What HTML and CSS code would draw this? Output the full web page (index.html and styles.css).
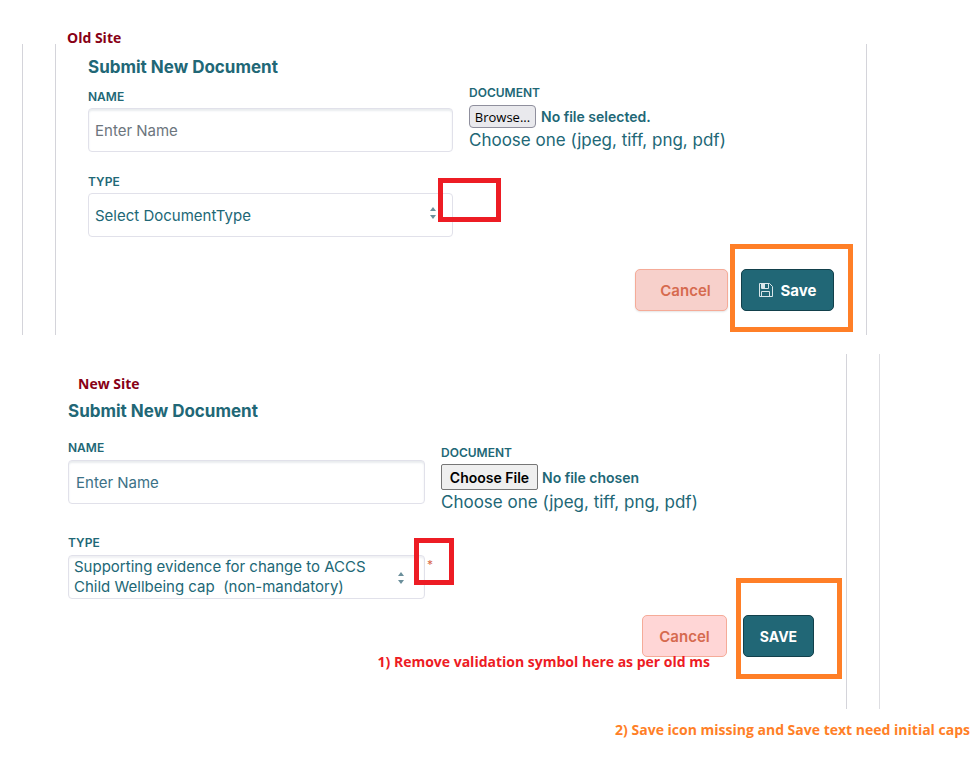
FILE: index.html
```html
<!DOCTYPE html>
<html lang="en">
<head>
    <meta charset="utf-8">
    <title>Submit New Document</title>
    <link rel="stylesheet" href="styles.css">
</head>

<body>
    <h2 class="site-title old-title">Old Site</h2>
    <section class="frame frame-old">
        <form class="panel">
            <h3>Submit New Document</h3>
            <div class="columns">
                <div class="col-left">
                    <label for="old-name">Name</label>
                    <div class="field"><input type="text" id="old-name" placeholder="Enter Name"></div>
                    <label for="old-type">Type</label>
                    <div class="field">
                        <select id="old-type">
                            <option>Select DocumentType</option>
                        </select>
                        <svg class="arrows" viewBox="0 0 6 12"><path d="M3 0l3 4H0zM3 12L0 8h6z"/></svg>
                        <span class="mark mark-red"></span>
                    </div>
                </div>
                <div class="col-right">
                    <label for="old-file">Document</label>
                    <div class="file-row">
                        <button type="button" id="old-file" class="browse">Browse...</button>
                        <span>No file selected.</span>
                    </div>
                    <p class="hint">Choose one (jpeg, tiff, png, pdf)</p>
                </div>
            </div>
            <div class="actions">
                <button type="button" class="btn cancel">Cancel</button>
                <div class="save-wrap">
                    <button type="button" class="btn save">
                        <svg class="disk" viewBox="0 0 14 14">
                            <path d="M.5.5h10l3 3v10H.5zM2.500.5v5h7v-5M2.500 13.500v-5h8v5"/>
                            <path class="solid" d="M3 1h3v4H3z"/>
                        </svg>
                        Save
                    </button>
                    <span class="mark mark-orange"></span>
                </div>
            </div>
        </form>
    </section>

    <section class="frame frame-new">
        <form class="panel">
            <h2 class="site-title new-title">New Site</h2>
            <h3>Submit New Document</h3>
            <div class="columns">
                <div class="col-left">
                    <label for="new-name">Name</label>
                    <div class="field"><input type="text" id="new-name" placeholder="Enter Name"></div>
                    <label for="new-type">Type</label>
                    <div class="field">
                        <select id="new-type">
                            <option>Supporting evidence for change to ACCS Child Wellbeing cap&nbsp; (non-mandatory)</option>
                        </select>
                        <svg class="arrows" viewBox="0 0 6 12"><path d="M3 0l3 4H0zM3 12L0 8h6z"/></svg>
                        <span class="required">*</span>
                        <span class="mark mark-red"></span>
                    </div>
                </div>
                <div class="col-right">
                    <label for="new-file">Document</label>
                    <input type="file" id="new-file">
                    <p class="hint">Choose one (jpeg, tiff, png, pdf)</p>
                </div>
            </div>
            <div class="actions">
                <button type="button" class="btn cancel">Cancel</button>
                <div class="save-wrap">
                    <button type="button" class="btn save">SAVE</button>
                    <span class="mark mark-orange"></span>
                </div>
                <p class="note note-red">1) Remove validation symbol here as per old ms</p>
            </div>
        </form>
    </section>
    <p class="note note-orange">2) Save icon missing and Save text need initial caps</p>
</body>
</html>
```
FILE: styles.css
```css
* {
    box-sizing: border-box;
}

body {
    margin: 0;
    background-color: #fff;
    color: #216776;
    font-family: Inter, sans-serif;
    font-size: 15px;
}

h2, h3, p {
    margin: 0;
}

.site-title, .note {
    font-family: "Open Sans", sans-serif;
    font-size: 14px;
    font-weight: 700;
    line-height: 20px;
}

.site-title {
    color: #880015;
}

.old-title {
    padding: 28px 0 0 67px;
    margin-bottom: -4px;
}

.new-title {
    padding-left: 10px;
    margin-bottom: 5px;
}

.frame-old {
    margin: 0 105px 19px 22px;
    padding-left: 32px;
    border-left: 1px solid #d4d4da;
}

.frame-new {
    margin-right: 92px;
    padding-right: 32px;
    border-right: 1px solid #dedee2;
}

.frame-old .panel {
    padding: 11px 32px 24px;
    border-left: 1px solid #d4d4da;
    border-right: 1px solid #d4d4da;
}

.frame-new .panel {
    padding: 20px 32px 52px 68px;
    border-right: 1px solid #d4d4da;
}

h3 {
    font-size: 17px;
    font-weight: 700;
    line-height: 24px;
}

.columns {
    display: grid;
    grid-template-columns: 1fr 1fr;
}

.frame-old .columns {
    column-gap: 16px;
    margin-top: 6px;
}

.frame-new .columns {
    margin-top: 17px;
}

.frame-old .col-left {
    padding-top: 4px;
}

.frame-new .col-left {
    padding-right: 16px;
}

.frame-new .col-right {
    padding-top: 5px;
}

label {
    display: block;
    margin-bottom: 3px;
    font-size: 12px;
    font-weight: 600;
    line-height: 16px;
    text-transform: uppercase;
}

.frame-new .col-left label {
    margin-bottom: 4px;
}

.field {
    position: relative;
}

.frame-old .field + label {
    margin-top: 22px;
}

.frame-new .field + label {
    margin-top: 31px;
}

.field input, .field select {
    display: block;
    width: 100%;
    height: 44px;
    padding: 0 6px;
    background-color: #fff;
    color: #216776;
    font: inherit;
    border: 1px solid #e1e1ea;
    border-radius: 4px;
}

.field input {
    box-shadow: inset 0 2px 2px #e9ecef;
}

.frame-new .field input {
    padding-left: 7px;
}

.field input::placeholder {
    color: #6c757d;
}

.frame-new .field input::placeholder {
    color: #3c7186;
}

.field select {
    appearance: none;
}

.frame-new .field select {
    padding: 1px 50px 1px 5px;
    line-height: 20px;
    white-space: normal;
    box-shadow: inset 0 2px 2px #f0f1f4;
}

.arrows {
    position: absolute;
    top: 14px;
    right: 17px;
    width: 6px;
    height: 12px;
    fill: #6b8f9b;
}

.frame-new .arrows {
    top: 17px;
    right: 21px;
}

.required {
    position: absolute;
    top: 0;
    left: 100%;
    padding-left: 2px;
    color: #d9694b;
    font-size: 12px;
    line-height: 20px;
}

.file-row {
    display: flex;
    align-items: center;
    gap: 5px;
    height: 23px;
    margin-top: 4px;
    font-size: 14px;
    font-weight: 600;
}

.browse {
    width: 67px;
    height: 23px;
    padding: 0;
    background-color: #e9e9ed;
    color: #000;
    font: 13px "Open Sans", sans-serif;
    border: 1px solid #8f8f9d;
    border-radius: 4px;
}

input[type="file"] {
    display: block;
    width: 100%;
    height: 26px;
    color: #216776;
    font: inherit;
    font-size: 14px;
    font-weight: 600;
}

input[type="file"]::file-selector-button {
    width: 97px;
    height: 26px;
    padding: 0;
    margin-right: 4px;
    background-color: #efefef;
    color: #000;
    font: inherit;
    border: 1px solid #767676;
    border-radius: 2px;
}

.hint {
    font-size: 17px;
    line-height: 24px;
}

.actions {
    position: relative;
    display: flex;
    justify-content: flex-end;
    gap: 16px;
    margin-top: 16px;
}

.frame-old .actions {
    gap: 13px;
    margin-top: 32px;
}

.btn {
    height: 42px;
    padding: 0 15px;
    font: inherit;
    font-size: 14px;
    font-weight: 600;
    border: 1px solid;
    border-radius: 5px;
}

.cancel {
    width: 85px;
    background-color: #ffd6d6;
    color: #d66a4f;
    font-size: 15px;
    border-color: #f5ab98;
}

.frame-old .cancel {
    width: 93px;
    padding: 0 16px 0 24px;
    background-color: #f7d0cb;
    box-shadow: 0 1px 2px #e4e4e4;
}

.save-wrap {
    position: relative;
}

.save {
    display: flex;
    align-items: center;
    justify-content: center;
    gap: 8px;
    width: 71px;
    background-color: #216776;
    color: #fff;
    font-weight: 700;
    border-color: #12404b;
}

.frame-old .save {
    width: 93px;
    font-size: 15px;
}

.disk {
    flex: none;
    width: 14px;
    height: 14px;
    fill: none;
    stroke: #d9e6e9;
}

.disk .solid {
    fill: #d9e6e9;
    stroke: none;
}

/* review marks drawn over the forms */
.mark {
    position: absolute;
    pointer-events: none;
}

.mark-red {
    top: -15px;
    left: calc(100% - 15px);
    width: 63px;
    height: 44px;
    border: 5px solid #ed1c24;
}

.frame-new .mark-red {
    top: -17px;
    left: calc(100% - 11px);
    width: 40px;
    height: 47px;
}

.mark-orange {
    top: -25px;
    left: -11px;
    width: 123px;
    height: 88px;
    border: 5px solid #ff7f27;
}

.frame-new .mark-orange {
    top: -37px;
    left: -7px;
    width: 106px;
    height: 101px;
}

.note {
    white-space: nowrap;
}

.note-red {
    position: absolute;
    top: 37px;
    right: 104px;
    color: #ed1c24;
}

.note-orange {
    padding: 11px 2px 0 0;
    color: #ff7f27;
    text-align: right;
}
```
